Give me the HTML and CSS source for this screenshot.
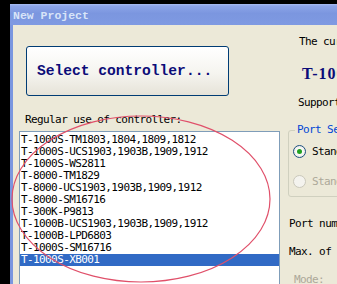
FILE: index.html
```html
<!DOCTYPE html>
<html lang="en">
<head>
    <meta charset="UTF-8" />
    <title>New Project</title>
    <link rel="stylesheet" href="styles.css">
</head>
<body>

<div class="desk">
    <div class="window">
        <div class="titlebar">New Project</div>
        <div class="client">
            <div class="left">
                <button class="select-btn">Select controller...</button>
                <div class="label">Regular use of controller:</div>
                <ul class="list">
                    <li>T-1000S-TM1803,1804,1809,1812</li>
                    <li>T-1000S-UCS1903,1903B,1909,1912</li>
                    <li>T-1000S-WS2811</li>
                    <li>T-8000-TM1829</li>
                    <li>T-8000-UCS1903,1903B,1909,1912</li>
                    <li>T-8000-SM16716</li>
                    <li>T-300K-P9813</li>
                    <li>T-1000B-UCS1903,1903B,1909,1912</li>
                    <li>T-1000B-LPD6803</li>
                    <li>T-1000S-SM16716</li>
                    <li class="selected">T-1000S-XB001</li>
                </ul>
            </div>
            <div class="right">
                <div class="txt current">The current controller:</div>
                <div class="model">T-1000S-XB001</div>
                <div class="txt support">Supported chips:</div>
                <fieldset class="group">
                    <legend>Port Setting</legend>
                    <div class="radio checked"><span class="dot"></span>Standard</div>
                    <div class="radio disabled"><span class="dot"></span>Standard</div>
                </fieldset>
                <div class="txt portnum">Port number:</div>
                <div class="txt maxl">Max. of lights:</div>
                <div class="txt mode">Mode:</div>
            </div>
        </div>
    </div>

    <svg class="annotation" width="337" height="284" viewBox="0 0 337 284">
        <ellipse cx="141" cy="199" rx="129" ry="83" fill="none" stroke="#e0506a" stroke-width="1.2"/>
    </svg>
</div>

</body>
</html>
```

FILE: styles.css
```css
body {
    margin: 0;
    background: #000;
    overflow: hidden;
    font-family: "DejaVu Sans Mono", monospace;
}

.desk {
    position: relative;
    width: 337px;
    height: 284px;
    overflow: hidden;
}

.window {
    margin: 4px 0 0 10px;
    width: 420px;
    height: 300px;
    border-left: 3px solid #7a96df;
    background: #ece9d8;
}

.titlebar {
    height: 21px;
    line-height: 24px;
    margin-left: -3px;
    padding-left: 3px;
    background: linear-gradient(#a9bdf2 0, #8ca4e8 2px, #7b96df 45%, #7f9ae2 100%);
    color: #d8e4f8;
    font-family: "Liberation Mono", monospace;
    font-weight: bold;
    font-size: 11.5px;
}

.client {
    display: grid;
    grid-template-columns: 273px 1fr;
}

.left {
    padding-top: 21px;
}

.select-btn {
    display: block;
    margin-left: 13px;
    width: 203px;
    height: 50px;
    padding: 0 0 0 10px;
    text-align: left;
    border: 1px solid #003c74;
    border-radius: 3px;
    background: linear-gradient(#ffffff, #f5f4ef 55%, #e6e3d8);
    color: #0c0c78;
    font-family: "Liberation Mono", monospace;
    font-size: 14.6px;
    font-weight: bold;
}

.label,
.txt,
.list li,
.radio {
    font-size: 11px;
    letter-spacing: -0.6px;
    line-height: 12px;
    height: 12px;
    color: #000;
    white-space: nowrap;
}

.label {
    margin: 18px 0 0 12px;
}

.list {
    list-style: none;
    margin: 5px 0 0 6px;
    padding: 2px 0 20px;
    width: 259px;
    background: #fff;
    border: 1px solid #7f9db9;
}

.list li {
    padding-left: 1px;
}

.list li.selected {
    background: #316ac5;
    color: #fff;
}

.right {
    padding-top: 11px;
}

.current {
    margin-left: 13px;
}

.model {
    margin: 17px 0 0 16px;
    color: #0c0c78;
    font-family: "Liberation Serif", serif;
    font-weight: bold;
    font-size: 16px;
    letter-spacing: 1px;
    line-height: 17px;
    white-space: nowrap;
}

.support {
    margin: 15px 0 0 12px;
}

.group {
    margin: 15px 0 0 2px;
    padding: 9px 0 0 4px;
    height: 62px;
    border: 1px solid #d0d0bf;
    border-radius: 3px;
}

.group legend {
    padding: 0 2px;
    margin-left: 2px;
    color: #0046d5;
    font-size: 11px;
    letter-spacing: -0.6px;
    line-height: 12px;
}

.radio {
    display: flex;
    align-items: center;
    gap: 6px;
    height: 13px;
}

.radio.disabled {
    margin-top: 17px;
    color: #aca899;
}

.dot {
    width: 11px;
    height: 11px;
    border-radius: 50%;
    border: 1px solid #1c5180;
    background: radial-gradient(circle, #ffffff 30%, #e0ded5);
    position: relative;
}

.radio.checked .dot::after {
    content: "";
    position: absolute;
    left: 3px;
    top: 3px;
    width: 5px;
    height: 5px;
    border-radius: 50%;
    background: #21a121;
}

.radio.disabled .dot {
    border-color: #cac8bb;
    background: #f4f3ee;
}

.portnum {
    margin: 21px 0 0 3px;
}

.maxl {
    margin: 16px 0 0 3px;
}

.mode {
    margin: 16px 0 0 8px;
    color: #aca899;
}

.annotation {
    position: absolute;
    left: 0;
    top: 0;
    pointer-events: none;
}
```
